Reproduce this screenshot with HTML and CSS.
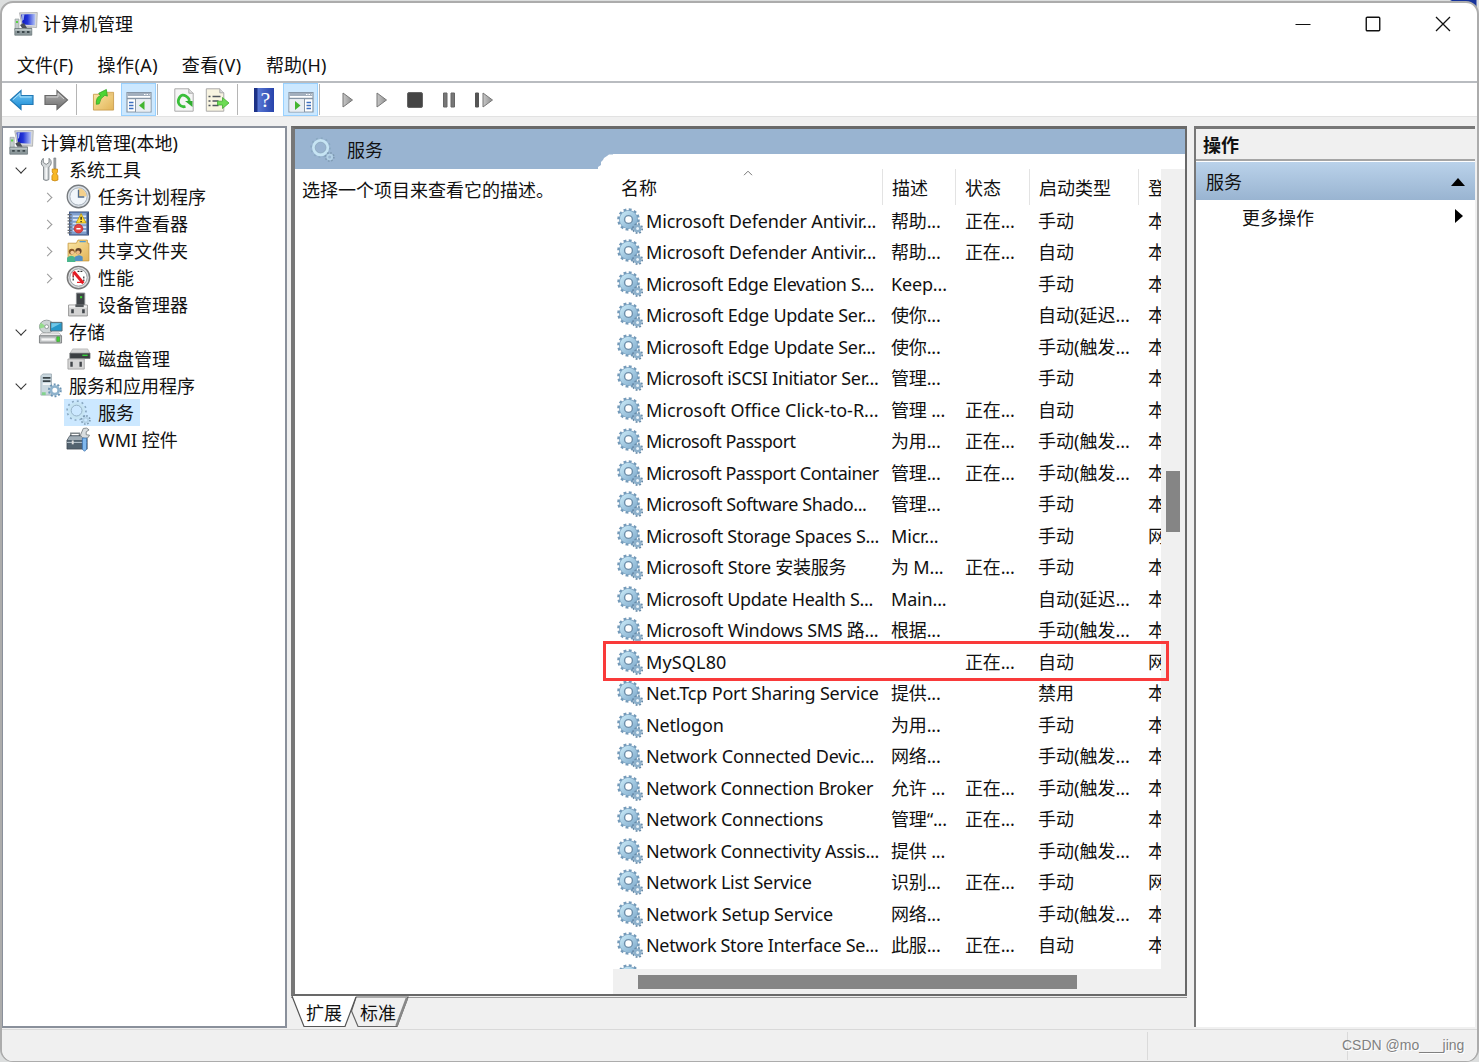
FILE: index.html
```html
<!DOCTYPE html>
<html lang="zh-CN">
<head>
<meta charset="utf-8">
<title>计算机管理</title>
<link rel="stylesheet" href="styles.css">
</head>
<body>
<svg class="defs" width="0" height="0" aria-hidden="true">
  <defs>
    <linearGradient id="gGear" x1="0" y1="0" x2="1" y2="1"><stop offset="0" stop-color="#c3e4f3"/><stop offset="1" stop-color="#86b0d0"/></linearGradient>
    <linearGradient id="gBlue" x1="0" y1="0" x2="0" y2="1"><stop offset="0" stop-color="#7ccdf6"/><stop offset="1" stop-color="#1185d3"/></linearGradient>
    <linearGradient id="gGray" x1="0" y1="0" x2="0" y2="1"><stop offset="0" stop-color="#b4b4b4"/><stop offset="1" stop-color="#6c6c6c"/></linearGradient>
    <linearGradient id="gScreen" x1="0" y1="0" x2="1" y2="0"><stop offset="0" stop-color="#0a14b8"/><stop offset=".45" stop-color="#2336d8"/><stop offset="1" stop-color="#b9c8f6"/></linearGradient>
    <linearGradient id="gFolder" x1="0" y1="0" x2="1" y2="1"><stop offset="0" stop-color="#fbe7a6"/><stop offset="1" stop-color="#e2b458"/></linearGradient>
    <linearGradient id="gPlay" x1="0" y1="0" x2="1" y2="0"><stop offset="0" stop-color="#c8c8c8"/><stop offset="1" stop-color="#8e8e8e"/></linearGradient>
  </defs>
  <symbol id="gear" viewBox="0 0 26 26">
    <circle cx="11.500" cy="11.500" r="9.900" fill="none" stroke="#7399b8" stroke-width="2.800" stroke-dasharray="2.800 2.380"/>
    <circle cx="11.500" cy="11.500" r="6.700" fill="none" stroke="#7ba3c2" stroke-width="5.600"/>
    <circle cx="11.500" cy="11.500" r="6.500" fill="none" stroke="url(#gGear)" stroke-width="4.400"/>
    <circle cx="11.500" cy="11.500" r="3.900" fill="#fff" stroke="#6d8fab" stroke-width="1.400"/>
    <circle cx="20.600" cy="20.500" r="4.600" fill="none" stroke="#6689a6" stroke-width="1.800" stroke-dasharray="1.800 1.810"/>
    <circle cx="20.600" cy="20.500" r="2.700" fill="#e8f2f8" stroke="#8db0cb" stroke-width="2.400"/>
  </symbol>
  <symbol id="gear-light" viewBox="0 0 26 26">
    <circle cx="11" cy="11" r="9.800" fill="none" stroke="#8aa9c2" stroke-width="1.800" stroke-dasharray="2 3.130"/>
    <circle cx="11" cy="11" r="7.300" fill="none" stroke="#c6e4f3" stroke-width="3.200"/>
    <circle cx="11" cy="11" r="5.600" fill="none" stroke="#8faabf" stroke-width=".9"/>
    <circle cx="20.500" cy="20.800" r="4.300" fill="none" stroke="#7f9bb3" stroke-width="1.800" stroke-dasharray="1.600 1.780"/>
    <circle cx="20.500" cy="20.800" r="2.500" fill="none" stroke="#b4d2e6" stroke-width="1.800"/>
  </symbol>
  <symbol id="computer" viewBox="0 0 24 24">
    <path d="M1 7h4v11H1z" fill="#c4cccc" stroke="#929a9a" stroke-width=".6"/>
    <path d="M2 9h2v2H2z" fill="#5bd444"/>
    <path d="M5.500.8 23.300.5 22.600 15.600 8 14.400z" fill="#d7d9da" stroke="#a0a2a3" stroke-width=".7"/>
    <path d="M7.200 2.400 21.400 2 21 13.300 8.600 12.500z" fill="url(#gScreen)"/>
    <path d="M8 2.300h2.500l-.8 5-1.500 2z" fill="#9fb0ee"/>
    <path d="M11 14.800h7v3h-7z" fill="#b7b9ba"/>
    <path d="m6 13 4-2 3 5H8z" fill="#4b5159"/>
    <path d="M.8 16.500h17v6.700H.8z" fill="#8c989b" stroke="#667276" stroke-width=".7"/>
    <path d="M1.200 17h16.200v1.700H1.200z" fill="#bac4c5"/>
    <path d="M3 20h2.500M8 20h2.500M13 20h2.500" stroke="#3c484c" stroke-width="1.800"/>
  </symbol>
  <symbol id="tools" viewBox="0 0 20 26">
    <path d="M2.500 1.400v4.300l3 2 3-2V1.400q2.500 2 2.300 4.600Q10.600 9 8.300 10.200V23.500q-2.800 2-5.500 0V10.200Q.4 8.800.4 6T2.500 1.400z" fill="#d4d8da" stroke="#737a7e" stroke-width=".9"/>
    <path d="M5.500 11v12" stroke="#fff" stroke-width="1.300"/>
    <path d="M13.500 1h2v11h-2z" fill="#a2a7aa" stroke="#6c7276" stroke-width=".6"/>
    <path d="M11.800 12.500h5.500v3l-1 2 1.400 2v4.500q-3.200 1.700-6.200 0v-4.500l1.400-2-1.100-2z" fill="#f7b825" stroke="#c68005" stroke-width=".8"/>
  </symbol>
  <symbol id="clock" viewBox="0 0 26 26">
    <circle cx="13" cy="13" r="11.700" fill="#dbe1e7" stroke="#777b7f" stroke-width="1.400"/>
    <circle cx="13" cy="13" r="9" fill="#f1f6fb" stroke="#a3adb7" stroke-width="1"/>
    <path d="M13 13V4.500a8.500 8.500 0 0 1 8.500 8.500z" fill="#f4d08c"/>
    <path d="M13 6v7.500h6" fill="none" stroke="#546e8c" stroke-width="1.400"/>
  </symbol>
  <symbol id="events" viewBox="0 0 24 24">
    <path d="M3.500 1h18v22h-18z" fill="#7f9fce" stroke="#2f4978"/>
    <path d="M6.500 5h13m-13 3.500h13m-13 3.500h13m-13 3.500h13m-13 3.500h13" stroke="#d6e4f7" stroke-width="1.500"/>
    <path d="M20.500 2v20" stroke="#3f5684" stroke-width="1.400"/>
    <path d="M1.500 3.500h4m-4 3h4m-4 3h4m-4 3h4m-4 3h4m-4 3h4m-4 2.500h4" stroke="#65696e" stroke-width="1.200"/>
    <path d="m14.500 2.500 4.800 9H9.700z" fill="#ffdc37" stroke="#b78e00" stroke-width=".7"/>
    <path d="M14.500 5.500v3m0 1v1.300" stroke="#222" stroke-width="1.300"/>
    <circle cx="12" cy="17" r="4.200" fill="#e34444" stroke="#b72222" stroke-width=".6"/>
    <path d="M10 17h4" stroke="#fff" stroke-width="1.400"/>
  </symbol>
  <symbol id="shared" viewBox="0 0 24 24">
    <path d="M2 5h8l1.500-3h9v3H22v17H2z" fill="url(#gFolder)" stroke="#c7993d" stroke-width=".8"/>
    <path d="M13 3.500h6" stroke="#4f9ad0" stroke-width="1.300"/>
    <circle cx="5.500" cy="13" r="2.800" fill="#8a5525"/><circle cx="6" cy="14" r="1.800" fill="#f3c794"/>
    <circle cx="12" cy="12.500" r="3" fill="#614129"/><circle cx="11.600" cy="13.800" r="1.900" fill="#edba84"/>
    <path d="M1 23v-4q4-4 8 0v4z" fill="#49b58c"/><path d="M8.500 22v-4q4.500-3 7.500 0v4z" fill="#5290c5"/>
  </symbol>
  <symbol id="perf" viewBox="0 0 26 26">
    <circle cx="13" cy="13" r="11.600" fill="#d9dbdd" stroke="#777" stroke-width="1.500"/>
    <circle cx="13" cy="13" r="9" fill="#fff" stroke="#8f9498" stroke-width=".9"/>
    <path d="M7.500 16V9M18.500 17v-6M12 6.500h5" stroke="#333" stroke-width="1.300" stroke-dasharray="2 1"/>
    <path d="m8 7 10 12" stroke="#e31b23" stroke-width="3"/>
    <path d="M7.500 7v5m4 6h6" stroke="#e31b23" fill="none" stroke-width="1.200"/>
  </symbol>
  <symbol id="device" viewBox="0 0 24 24">
    <path d="M10 1h8v13h-8z" fill="#3f4347" stroke="#8a8e91" stroke-width=".9"/>
    <path d="M13.500 4h2v2h-2z" fill="#3ed53a"/>
    <path d="M2.500 12.500h18V23h-18z" fill="#d3d3d3" stroke="#939393" stroke-width=".9"/>
    <path d="M3 13h17v2H3z" fill="#f3f3f3"/><path d="M9 12h8v2.500H9z" fill="#55595c"/>
    <path d="M5 16.500h2.500v4H5zm10.500 0H18v4h-2.500z" fill="#41464b"/>
  </symbol>
  <symbol id="storage" viewBox="0 0 26 26">
    <ellipse cx="9" cy="8" rx="7.500" ry="6.800" fill="#cdd4d4" stroke="#8a9393" stroke-width=".9"/>
    <path d="m9 8-6-4q-2 3-1 6z" fill="#94dc8b"/><circle cx="9" cy="8" r="2" fill="#fff" stroke="#8d9696"/>
    <path d="M13 3.500h12v9H13z" fill="#2798c9" stroke="#5b6a70" stroke-width="1"/><path d="M14 4.500h10l-10 5z" fill="#72c8e8"/>
    <path d="m4 14.500-2.500 3h23l-2.500-3z" fill="#ececec" stroke="#a4a4a4" stroke-width=".7"/>
    <path d="M1.500 17.500h23V25h-23z" fill="#bfc2c3" stroke="#75797b" stroke-width=".9"/>
    <path d="M3.500 21.300h14" stroke="#f6f6f6" stroke-width="2.400"/><path d="M19.500 18.500h3v5h-3z" fill="#43d238" stroke="#398f2c" stroke-width=".6"/>
  </symbol>
  <symbol id="disk" viewBox="0 0 26 24">
    <path d="m7 2-3 5h21l-2.500-5z" fill="#d6d6d6" stroke="#a5a5a5" stroke-width=".6"/>
    <path d="M4 6.500h21V12H4z" fill="#3a3e41" stroke="#676b6d" stroke-width=".7"/><path d="M17 8.700h5.500" stroke="#38d13d" stroke-width="1.500"/>
    <path d="M2 12.500h17V23H2z" fill="#d7d7d7" stroke="#999" stroke-width=".8"/>
    <path d="M4.500 15.500H7v5H4.500zm9.500 0h2.500v5H14z" fill="#42464a"/>
  </symbol>
  <symbol id="server" viewBox="0 0 26 26">
    <path d="m3 3 2-2h9v22H3z" fill="#cad8df" stroke="#96a5ad" stroke-width=".8"/>
    <path d="M5 5h8M5 8.500h8" stroke="#3a4449" stroke-width="1.800"/><path d="M5 11.500h8" stroke="#fff" stroke-width="1.500"/>
    <path d="M4 20h4v3H4z" fill="#83d28d"/>
    <circle cx="17.500" cy="18" r="6.200" fill="none" stroke="#6992b2" stroke-width="2" stroke-dasharray="2 1.900"/>
    <circle cx="17.500" cy="18" r="4" fill="#fff" stroke="#8eb2cc" stroke-width="2.800"/>
  </symbol>
  <symbol id="wmi" viewBox="0 0 26 26">
    <path d="M5 10V6.500h9V10" fill="none" stroke="#80878b" stroke-width="1.500"/>
    <path d="m4 9-3 5v9h21V12l-3-3z" fill="#53636f" stroke="#354049" stroke-width=".7"/>
    <path d="M3.800 9.500h16l1.500 4H1.800z" fill="#a1adb6"/><path d="M1 16h21" stroke="#c3d0d9"/>
    <path d="M6 14h2v4H6z" fill="#ddd"/>
    <path d="M18 1.500q4-1.500 6 1.500l-3 2v3l3.500.5q-1 3.500-4.500 3.500t-5-3.500z" fill="#d9dddf" stroke="#7a8083" stroke-width=".9"/>
    <path d="M17 11.500h4.500V23l-2.200 2.300L17 23z" fill="#80b8ed" stroke="#356caa" stroke-width=".8"/>
  </symbol>
</svg>

<div class="window">
  <header class="titlebar">
    <svg class="app-icon"><use href="#computer"/></svg>
    <span class="title">计算机管理</span>
    <div class="caption">
      <svg viewBox="0 0 16 16"><path d="M.5 8.500h15" stroke="#111" stroke-width="1"/></svg>
      <svg viewBox="0 0 16 16"><rect x="1.250" y="1.250" width="13.500" height="13.500" rx="1" fill="none" stroke="#111" stroke-width="1.400"/></svg>
      <svg viewBox="0 0 16 16"><path d="m1 1 14 14M15 1 1 15" fill="none" stroke="#111" stroke-width="1.300"/></svg>
    </div>
  </header>
  <nav class="menubar"><span>文件(F)</span><span>操作(A)</span><span>查看(V)</span><span>帮助(H)</span></nav>

  <div class="toolbar">
    <svg class="tb back" viewBox="0 0 26 22"><path d="M1.500 11 12 1.500V6.500h12v9H12v5z" fill="url(#gBlue)" stroke="#2279b5" stroke-width="1.200"/><path d="M4 10.700 11 4.500V8h11.500" fill="none" stroke="#a9e0fb" stroke-width="1"/></svg>
    <svg class="tb fwd" viewBox="0 0 26 22"><path d="M24.500 11 14 1.500V6.500H2v9h12v5z" fill="url(#gGray)" stroke="#6a6a6a" stroke-width="1.200"/><path d="M3.300 8H15V4.500l6 5.500" fill="none" stroke="#cfcfcf"/></svg>
    <i class="sep s1"></i>
    <svg class="tb up" viewBox="0 0 24 24"><path d="M1.500 6H9l2-2h11.500V22.500H1.500z" fill="url(#gFolder)" stroke="#c89b4a" stroke-width=".9"/><path d="M14 4.500h8v3h-8z" fill="#e8c479"/><path d="M4.500 16.500q-.5-8 4.500-9L7 5l8-4 1 7-2.500-1Q8.500 9.500 7.500 16z" fill="#4bd533" stroke="#2fa31f" stroke-width=".8"/></svg>
    <span class="toggle t1"><svg viewBox="0 0 26 22"><path d="M1 1.500h24v19.500H1z" fill="#fff" stroke="#8796a6" stroke-width="1.200"/><path d="M1.500 2h23v3h-23z" fill="#a3afbd"/><path d="M18 3.500h5.500" stroke="#fff" stroke-dasharray="1.500 1"/><path d="M1 7.500h24" stroke="#8796a6" stroke-width="1.600"/><path d="M9.500 8v13" stroke="#8796a6"/><path d="M3 11.500h4.500M3 14.500h4.500M3 17.500h4.500" stroke="#3d6fc0" stroke-width="1.300"/><path d="M10 8.500h14.500v12H10z" fill="#e9eef3"/><path d="m18.500 10-5.500 4.500 5.500 4.500z" fill="#42b52f"/></svg></span>
    <i class="sep s2"></i>
    <svg class="tb refresh" viewBox="0 0 20 24"><path d="M.8.8h14l4.400 4.400v18H.8z" fill="#f5f5f5" stroke="#aaa"/><path d="M14.800.8v4.400h4.400" fill="#ddd" stroke="#aaa"/><path d="M11.500 18.500q-4 1-6.200-2T5.500 9.500t6.500-1.300 2.800 5" fill="none" stroke="#3abf3a" stroke-width="2.800"/><path d="M11 13h7.500v6z" fill="#30ad30"/></svg>
    <svg class="tb export" viewBox="0 0 24 24"><path d="M.8.8h13.500l4 4v18.400H.8z" fill="#f8f4e1" stroke="#aaa"/><path d="M14.300.8v4h4" fill="#ddd" stroke="#aaa"/><path d="M3 8.500h2M7 8.500h8M3 13h2M7 13h6M3 17.500h2M7 17.500h6" stroke="#50565e" stroke-width="1.500"/><path d="M12 13.200h5V9.500l6.500 5.500-6.500 5.500V17h-5z" fill="#6ddb54" stroke="#44ab33" stroke-width=".8"/></svg>
    <i class="sep s3"></i>
    <span class="tb help">?</span>
    <span class="toggle t2"><svg viewBox="0 0 26 22"><path d="M1 1.500h24v19.500H1z" fill="#fff" stroke="#8796a6" stroke-width="1.200"/><path d="M1.500 2h23v3h-23z" fill="#a3afbd"/><path d="M18 3.500h5.500" stroke="#fff" stroke-dasharray="1.500 1"/><path d="M1 7.500h24" stroke="#8796a6" stroke-width="1.600"/><path d="M1.500 8.500h14.500v12H1.500z" fill="#e9eef3"/><path d="M16.500 8v13" stroke="#8796a6"/><path d="M18.500 11.500H23M18.500 14.500H23M18.500 17.500H23" stroke="#3d6fc0" stroke-width="1.300"/><path d="m7 10 5.500 4.500L7 19z" fill="#42b52f"/></svg></span>
    <i class="sep s4"></i>
    <svg class="tb play p1" viewBox="0 0 12 16"><path d="M1 1v14l9.500-7z" fill="url(#gPlay)" stroke="#777"/></svg>
    <svg class="tb play p2" viewBox="0 0 12 16"><path d="M1 1v14l9.500-7z" fill="url(#gPlay)" stroke="#777"/></svg>
    <svg class="tb stop" viewBox="0 0 16 16"><rect x=".5" y=".5" width="15" height="15" rx="1.500" fill="#454545" stroke="#666"/></svg>
    <svg class="tb pause" viewBox="0 0 14 16"><path d="M1.500 1h3.500v14H1.500zm7.500 0h3.500v14H9z" fill="#777" stroke="#666"/></svg>
    <svg class="tb restart" viewBox="0 0 20 16"><path d="M1.500 1h3v14h-3z" fill="#555" stroke="#555"/><path d="M9 1v14l9.500-7z" fill="url(#gPlay)" stroke="#777"/></svg>
  </div>

  <main class="content">
    <aside class="tree">
      <div class="node l0"><svg><use href="#computer"/></svg><span>计算机管理(本地)</span></div>
      <div class="node l1 open"><svg><use href="#tools"/></svg><span>系统工具</span></div>
      <div class="node l2 closed"><svg><use href="#clock"/></svg><span>任务计划程序</span></div>
      <div class="node l2 closed"><svg><use href="#events"/></svg><span>事件查看器</span></div>
      <div class="node l2 closed"><svg><use href="#shared"/></svg><span>共享文件夹</span></div>
      <div class="node l2 closed"><svg><use href="#perf"/></svg><span>性能</span></div>
      <div class="node l2"><svg><use href="#device"/></svg><span>设备管理器</span></div>
      <div class="node l1 open"><svg><use href="#storage"/></svg><span>存储</span></div>
      <div class="node l2"><svg><use href="#disk"/></svg><span>磁盘管理</span></div>
      <div class="node l1 open"><svg><use href="#server"/></svg><span>服务和应用程序</span></div>
      <div class="node l2 selected"><svg><use href="#gear-light"/></svg><span>服务</span></div>
      <div class="node l2"><svg><use href="#wmi"/></svg><span>WMI 控件</span></div>
    </aside>

    <section class="center">
      <div class="frame">
        <div class="banner"><svg><use href="#gear-light"/></svg><span>服务</span></div>
        <div class="detail">
          <p class="hint">选择一个项目来查看它的描述。</p>
          <div class="listarea">
            <svg class="tab-corner" viewBox="0 0 16 15"><path d="M0 15V13L3 11 3 8 5 6 6 4 9 2 11 .5H16V15z" fill="#fff"/></svg>
            <div class="scroller">
              <div class="list">
                <div class="row head"><span>名称<svg class="sort" viewBox="0 0 10 6"><path d="m1 5.200 4-4 4 4" fill="none" stroke="#777"/></svg></span><span>描述</span><span>状态</span><span>启动类型</span><span>登</span></div>
                <div class="row"><svg><use href="#gear"/></svg><span>Microsoft Defender Antivir...</span><span>帮助...</span><span>正在...</span><span>手动</span><span>本</span></div>
                <div class="row"><svg><use href="#gear"/></svg><span>Microsoft Defender Antivir...</span><span>帮助...</span><span>正在...</span><span>自动</span><span>本</span></div>
                <div class="row"><svg><use href="#gear"/></svg><span class="snug">Microsoft Edge Elevation S...</span><span>Keep...</span><span></span><span>手动</span><span>本</span></div>
                <div class="row"><svg><use href="#gear"/></svg><span class="near">Microsoft Edge Update Ser...</span><span>使你...</span><span></span><span>自动(延迟...</span><span>本</span></div>
                <div class="row"><svg><use href="#gear"/></svg><span class="near">Microsoft Edge Update Ser...</span><span>使你...</span><span></span><span>手动(触发...</span><span>本</span></div>
                <div class="row"><svg><use href="#gear"/></svg><span class="snug">Microsoft iSCSI Initiator Ser...</span><span>管理...</span><span></span><span>手动</span><span>本</span></div>
                <div class="row"><svg><use href="#gear"/></svg><span class="wide">Microsoft Office Click-to-R...</span><span>管理 ...</span><span>正在...</span><span>自动</span><span>本</span></div>
                <div class="row"><svg><use href="#gear"/></svg><span class="tight">Microsoft Passport</span><span>为用...</span><span>正在...</span><span>手动(触发...</span><span>本</span></div>
                <div class="row"><svg><use href="#gear"/></svg><span class="tight">Microsoft Passport Container</span><span>管理...</span><span>正在...</span><span>手动(触发...</span><span>本</span></div>
                <div class="row"><svg><use href="#gear"/></svg><span class="close">Microsoft Software Shado...</span><span>管理...</span><span></span><span>手动</span><span>本</span></div>
                <div class="row"><svg><use href="#gear"/></svg><span class="snug">Microsoft Storage Spaces S...</span><span>Micr...</span><span></span><span>手动</span><span>网</span></div>
                <div class="row"><svg><use href="#gear"/></svg><span class="near">Microsoft Store 安装服务</span><span>为 M...</span><span>正在...</span><span>手动</span><span>本</span></div>
                <div class="row"><svg><use href="#gear"/></svg><span class="snug">Microsoft Update Health S...</span><span>Main...</span><span></span><span>自动(延迟...</span><span>本</span></div>
                <div class="row"><svg><use href="#gear"/></svg><span class="near">Microsoft Windows SMS 路...</span><span>根据...</span><span></span><span>手动(触发...</span><span>本</span></div>
                <div class="row"><svg><use href="#gear"/></svg><span class="wider">MySQL80</span><span></span><span>正在...</span><span>自动</span><span>网</span></div>
                <div class="row"><svg><use href="#gear"/></svg><span>Net.Tcp Port Sharing Service</span><span>提供...</span><span></span><span>禁用</span><span>本</span></div>
                <div class="row"><svg><use href="#gear"/></svg><span>Netlogon</span><span>为用...</span><span></span><span>手动</span><span>本</span></div>
                <div class="row"><svg><use href="#gear"/></svg><span>Network Connected Devic...</span><span>网络...</span><span></span><span>手动(触发...</span><span>本</span></div>
                <div class="row"><svg><use href="#gear"/></svg><span class="snug">Network Connection Broker</span><span>允许 ...</span><span>正在...</span><span>手动(触发...</span><span>本</span></div>
                <div class="row"><svg><use href="#gear"/></svg><span class="near">Network Connections</span><span>管理“...</span><span>正在...</span><span>手动</span><span>本</span></div>
                <div class="row"><svg><use href="#gear"/></svg><span class="snug">Network Connectivity Assis...</span><span>提供 ...</span><span></span><span>手动(触发...</span><span>本</span></div>
                <div class="row"><svg><use href="#gear"/></svg><span class="near">Network List Service</span><span>识别...</span><span>正在...</span><span>手动</span><span>网</span></div>
                <div class="row"><svg><use href="#gear"/></svg><span>Network Setup Service</span><span>网络...</span><span></span><span>手动(触发...</span><span>本</span></div>
                <div class="row"><svg><use href="#gear"/></svg><span class="snug">Network Store Interface Se...</span><span>此服...</span><span>正在...</span><span>自动</span><span>本</span></div>
                <div class="row"><svg><use href="#gear"/></svg></div>
              </div>
              <div class="vbar"><i></i></div>
              <div class="hbar"><i></i></div>
              <div class="highlight"></div>
            </div>
          </div>
        </div>
      </div>
      <div class="viewtabs">
        <svg viewBox="0 0 120 32" width="120" height="32"><path d="M65 1h52L106 30.500H67L60.500 15z" fill="#f0f0f0" stroke="#666" stroke-width="1.200"/><path d="M116 2 105.500 30" stroke="#888" stroke-width="2.500"/><path d="M1 0 13 30.500H54L65 0z" fill="#fff"/><path d="M1 0 13 30.500H54L65 1" fill="none" stroke="#555" stroke-width="1.200"/></svg>
        <span class="vt1">扩展</span><span class="vt2">标准</span>
      </div>
    </section>

    <aside class="actions">
      <h2>操作</h2>
      <div class="group"><span>服务</span><svg viewBox="0 0 14 8" width="14" height="8"><path d="M0 8 7 0l7 8z"/></svg></div>
      <div class="more"><span>更多操作</span><svg viewBox="0 0 8 14" width="8" height="14"><path d="M0 0v14l8-7z"/></svg></div>
    </aside>
  </main>
  <footer class="status"><i></i><i></i><span>CSDN @mo___jing</span></footer>
</div>
</body>
</html>
```
FILE: styles.css
```css
* { box-sizing: border-box; }

body {
  margin: 0;
  width: 1479px;
  height: 1062px;
  overflow: hidden;
  padding-top: 1px;
  background: linear-gradient(90deg, #dcdede 0 1450px, #16339b 1452px 1476px, #dcdede 1477px) top / 100% 12px no-repeat #dcdede;
  font: 18px/24px "Noto Sans", "Noto Sans CJK SC", sans-serif;
  color: #111;
}

svg { display: block; flex: none; }
.defs { position: absolute; }

.window {
  width: 1479px;
  height: 1061px;
  display: flex;
  flex-direction: column;
  border: 2px solid #acacac;
  border-bottom-width: 1px;
  border-radius: 13px;
  background: #fff;
  overflow: hidden;
}

.titlebar { height: 42px; display: flex; align-items: center; padding-left: 12px; flex: none; }
.app-icon { width: 24px; height: 24px; }
.title { margin-left: 5px; }
.caption { margin-left: auto; margin-right: 26px; display: flex; gap: 54px; }
.caption svg { width: 16px; height: 16px; }

.menubar { height: 36px; flex: none; display: flex; align-items: center; gap: 23.500px; padding: 3px 0 0 15px; white-space: nowrap; }
.menubar span { width: 60.700px; letter-spacing: .45px; }
.menubar span:first-child { width: 57px; letter-spacing: 0; }
.menubar span:last-child { width: auto; letter-spacing: .1px; }

.toolbar {
  height: 36px;
  flex: none;
  display: flex;
  align-items: center;
  border-top: 2px solid #b9bcc0;
  border-bottom: 1px solid #e2e2e2;
  padding-left: 7px;
}
.tb { flex: none; }
.back, .fwd { width: 26px; height: 22px; }
.fwd { margin-left: 8px; }
.sep { width: 1px; height: 31px; background: #b5b5b5; flex: none; }
.s1 { margin-left: 7px; }
.up { width: 23px; height: 24px; margin-left: 15px; }
.toggle {
  width: 35px;
  height: 33px;
  flex: none;
  display: flex;
  align-items: center;
  justify-content: center;
  background: #cce8ff;
  border: 1px solid #99d1ff;
}
.toggle svg { width: 26px; height: 22px; margin-top: 4px; }
.t1 { margin-left: 6px; }
.s2 { margin-left: 1px; }
.refresh { width: 20px; height: 24px; margin-left: 16px; }
.export { width: 25px; height: 24px; margin-left: 11px; }
.s3 { margin-left: 7px; }
.help {
  width: 20px;
  height: 24px;
  margin-left: 16px;
  background: linear-gradient(90deg, #1c3187 3px, #5877d4 4px, #2743ab);
  color: #fff;
  font: 22px/24px "Liberation Serif", serif;
  text-align: center;
  padding-left: 3px;
}
.t2 { margin-left: 9px; }
.s4 { margin-left: 1px; }
.play { width: 12px; height: 16px; }
.p1 { margin-left: 22px; }
.p2 { margin-left: 22px; }
.stop { width: 16px; height: 16px; margin-left: 19px; }
.pause { width: 14px; height: 16px; margin-left: 19px; }
.restart { width: 20px; height: 16px; margin-left: 18px; }

.content { height: 912px; flex: none; display: flex; background: #f0f0f0; padding: 9px 1px 0 0; }

.tree { width: 286px; height: 902px; margin-left: -1px; background: #fff; border: 2px solid #8a909b; padding-top: 1px; flex: none; }
.node { height: 27px; display: flex; align-items: center; position: relative; }
.node svg { width: 25px; height: 25px; }
.node span { margin-left: 7px; }
.l0 { padding-left: 6px; }
.l1 { padding-left: 35px; }
.l2 { padding-left: 63px; }
.l1 span { margin-left: 6px; }
.open::before, .closed::before {
  content: "";
  position: absolute;
  width: 7px;
  height: 7px;
  border: solid #333;
  border-width: 0 1.300px 1.300px 0;
}
.open::before { left: 14px; top: 8px; transform: rotate(45deg); }
.closed::before { left: 41px; top: 11px; width: 6px; height: 6px; border-color: #999; transform: rotate(-45deg); }
.selected { background: linear-gradient(#cce8ff, #cce8ff) 61px 0 / 76px 27px no-repeat; }

.center { width: 896px; margin-left: 4px; flex: none; }
.frame {
  height: 870px;
  background: #fff;
  border: solid #696969;
  border-width: 3px 2px 2px 4px;
  border-left-color: #777;
}
.banner { height: 40px; display: flex; align-items: center; padding-left: 15px; background: #99b4d1; }
.banner svg { width: 25px; height: 25px; }
.banner span { margin: 2px 0 0 12px; }
.detail { height: 825px; display: flex; }
.hint { margin: 9px 0 0; padding-left: 7px; width: 303px; flex: none; white-space: nowrap; }
.listarea { width: 587px; height: 840px; margin-top: -15px; padding: 15px 0 0 15px; flex: none; background: linear-gradient(#fff, #fff) 15px 0 no-repeat; }
.tab-corner { width: 16px; height: 15px; margin: -15px 0 0 -15px; }
.scroller { display: grid; grid-template: 800px 25px / 548px 24px; position: relative; }
.list { overflow: hidden; }
.vbar { grid-row: 1 / 3; grid-column: 2; background: #f0f0f0; padding: 302px 0 0 5px; }
.vbar i { display: block; width: 14px; height: 61px; background: #858585; }
.hbar { grid-row: 2; grid-column: 1; background: #f0f0f0; padding: 6px 0 0 25px; }
.hbar i { display: block; width: 439px; height: 14px; background: #858585; }
.highlight { position: absolute; left: -10px; top: 472px; width: 566px; height: 40px; border: 3px solid #f93a3a; }

.row { height: 31.500px; display: grid; grid-template-columns: 5px 28px 245px 74px 73px 110px 13px; align-items: center; white-space: nowrap; }
.row svg { grid-column: 2; width: 26px; height: 26px; margin-left: -1px; }
.row span:nth-of-type(-n+3) { letter-spacing: -.17px; }
.row span.near { letter-spacing: -.27px; }
.row span.snug { letter-spacing: -.32px; }
.row span.close { letter-spacing: -.41px; }
.row span.tight { letter-spacing: -.5px; }
.row span.wide { letter-spacing: 0; }
.row span.wider { letter-spacing: .15px; }
.row.head { grid-template-columns: 270px 73px 74px 109px 22px; height: 36px; }
.row.head span { position: relative; height: 36px; line-height: 38px; padding-left: 9px; border-right: 1px solid #e3e3e3; letter-spacing: 0; }
.row.head span:first-child { padding-left: 8px; }
.row.head span:last-child { border-right: 0; overflow: hidden; }
.row:not(.head) span:last-child { overflow: hidden; }
.row .sort { position: absolute; left: 130px; top: 1px; width: 10px; height: 6px; margin: 0; }

.viewtabs { height: 32px; border-top: 1px solid #999; margin-top: 1px; position: relative; }
.viewtabs svg { margin-top: -2px; }
.viewtabs span { position: absolute; top: 3px; }
.vt1 { left: 15px; }
.vt2 { left: 69px; }

.actions { width: 281px; height: 901px; margin-left: 7px; background: #fff; border: solid #777; border-width: 3px 0 0 2px; flex: none; }
.actions h2 { margin: 0; height: 32px; font-size: 18px; line-height: 33px; padding-left: 7px; background: #f0f0f0; border-bottom: 2px solid #a5a5a5; }
.group { height: 39px; display: flex; align-items: center; justify-content: space-between; padding: 2px 10px 0; border-top: 1px solid #fff; background: linear-gradient(#bad2ea, #99b4d1); }
.more { display: flex; align-items: center; justify-content: space-between; padding: 6px 12px 0 46px; }
.more svg { margin-top: -4px; }

.status { flex: 1; background: #f0f0f0; border-top: 1px solid #d9d9d9; display: flex; padding: 2px 0 0 1145px; }
.status i { width: 200px; height: 28px; border-left: 1px solid #dadada; flex: none; }
.status i + i { width: 1px; }
.status span { margin: 1px 0 0 -6px; font: 14px/24px "Liberation Sans", Arial, sans-serif; color: #808080; text-shadow: 1px 1px #fff; white-space: nowrap; }
```
